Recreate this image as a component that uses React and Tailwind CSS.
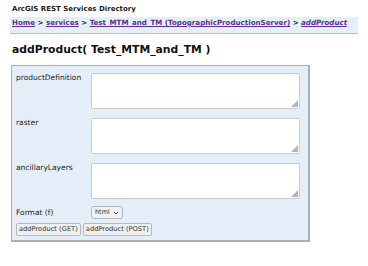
import React from 'react';

const font = { fontFamily: '"DejaVu Sans", Verdana, sans-serif' };

function Field({ label }) {
  return (
    <div className="flex items-start">
      <div className="w-[75px] -mt-[1px] text-[7.5px] text-[#222]">{label}</div>
      <div className="relative w-[209px] h-[36px] bg-white border border-[#c9ccd1] rounded-[2px]">
        {/* resize grip */}
        <svg className="absolute right-[1px] bottom-[1px]" width="7" height="7" viewBox="0 0 7 7">
          <path d="M7 0 L7 7 L0 7 Z" fill="#b5b5b5" />
        </svg>
      </div>
    </div>
  );
}

export default function App() {
  return (
    <div className="w-[368px] h-[266px] bg-white overflow-hidden" style={font}>
      <div className="pl-[12px] pt-[4px] text-[7px] font-bold text-[#222] leading-[10px]">
        ArcGIS REST Services Directory
      </div>

      {/* Breadcrumb */}
      <div className="ml-[10px] mr-[10px] mt-[3px] h-[17px] bg-[#e5eff8] border-b border-[#b9c0c8] pl-[2px] pt-[1px] text-[7.1px] font-bold text-[#5b2f8f] leading-[10px]">
        <span className="underline">Home</span>
        <span className="text-[#222]"> &gt; </span>
        <span className="underline">services</span>
        <span className="text-[#222]"> &gt; </span>
        <span className="underline">Test_MTM_and_TM (TopographicProductionServer)</span>
        <span className="text-[#222]"> &gt; </span>
        <span className="underline italic">addProduct</span>
      </div>

      <h2 className="pl-[12px] mt-[9px] text-[10.8px] font-bold text-[#111] leading-[14px]">
        addProduct( Test_MTM_and_TM )
      </h2>

      {/* Form */}
      <div className="ml-[11px] mt-[8px] w-[299px] h-[177px] bg-[#e4eef8] border border-[#a9afb6] border-r-2 border-b-2 pl-[4px] pt-[7px] flex flex-col">
        <Field label="productDefinition" />
        <div className="mt-[9px]"><Field label="raster" /></div>
        <div className="mt-[9px]"><Field label="ancillaryLayers" /></div>
        <div className="flex items-center mt-[7px]">
          <div className="w-[75px] text-[7.5px] text-[#222]">Format (f)</div>
          <div className="flex items-center gap-[3px] h-[13px] px-[3px] bg-[#eef2f6] border border-[#b4b9bf] rounded-[3px] text-[6.5px] text-[#333]">
            html
            <svg width="6" height="4" viewBox="0 0 6 4">
              <path d="M1 1 L3 3 L5 1" stroke="#444" strokeWidth="0.9" fill="none" />
            </svg>
          </div>
        </div>
        <div className="flex gap-[2px] mt-[4px]">
          <div className="h-[13px] px-[2px] flex items-center bg-[#eef0f2] border border-[#b4b9bf] rounded-[2px] text-[6.7px] text-[#333]">
            addProduct (GET)
          </div>
          <div className="h-[13px] px-[2px] flex items-center bg-[#eef0f2] border border-[#b4b9bf] rounded-[2px] text-[6.7px] text-[#333]">
            addProduct (POST)
          </div>
        </div>
      </div>
    </div>
  );
}
